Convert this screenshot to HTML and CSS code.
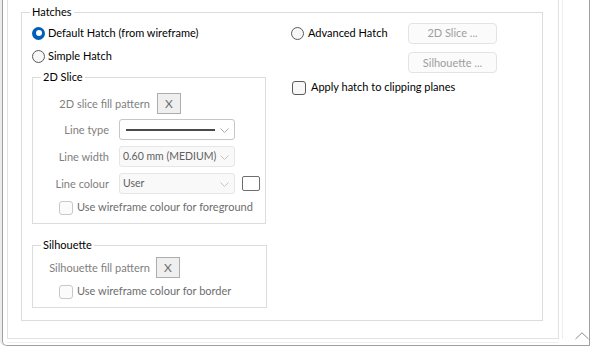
FILE: index.html
```html
<!DOCTYPE html>
<html>
<head>
<meta charset="utf-8">
<link rel="stylesheet" href="styles.css">
</head>
<body>
<div class="frame">
  <div class="panel">
    <div class="group hatches">
      <span class="legend">Hatches</span>
      <div class="cols">
        <div class="left">
          <div class="radio-row"><span class="radio on"></span><span class="t">Default Hatch (from wireframe)</span></div>
          <div class="radio-row second"><span class="radio"></span><span class="t">Simple Hatch</span></div>

          <div class="group slice">
            <span class="legend">2D Slice</span>
            <div class="fill-row">
              <span class="fill-label dis">2D slice fill pattern</span>
              <span class="xbtn">X</span>
            </div>
            <div class="form">
              <span class="lbl dis">Line type</span>
              <div class="select light"><span class="linesample"></span><svg class="chev" width="9" height="5" viewBox="0 0 9 5"><polyline points="0.5,0.5 4.5,4.5 8.5,0.5" fill="none" stroke="#a8a8a8" stroke-width="1"/></svg></div>
              <span></span>
              <span class="lbl dis">Line width</span>
              <div class="select"><span class="val">0.60 mm (MEDIUM)</span><svg class="chev" width="9" height="5" viewBox="0 0 9 5"><polyline points="0.5,0.5 4.5,4.5 8.5,0.5" fill="none" stroke="#c4c4c4" stroke-width="1"/></svg></div>
              <span></span>
              <span class="lbl dis">Line colour</span>
              <div class="select"><span class="val">User</span><svg class="chev" width="9" height="5" viewBox="0 0 9 5"><polyline points="0.5,0.5 4.5,4.5 8.5,0.5" fill="none" stroke="#c4c4c4" stroke-width="1"/></svg></div>
              <span class="swatch"></span>
            </div>
            <div class="check-row"><span class="check dis-box"></span><span class="dis2 t">Use wireframe colour for foreground</span></div>
          </div>

          <div class="group silh">
            <span class="legend">Silhouette</span>
            <div class="fill-row">
              <span class="fill-label dis">Silhouette fill pattern</span>
              <span class="xbtn">X</span>
            </div>
            <div class="check-row"><span class="check dis-box"></span><span class="dis2 t">Use wireframe colour for border</span></div>
          </div>
        </div>

        <div class="right">
          <div class="radio-row"><span class="radio"></span><span class="t">Advanced Hatch</span></div>
          <span class="btn">2D Slice ...</span>
          <span></span>
          <span class="btn">Silhouette ...</span>
          <div class="check-row apply"><span class="check"></span><span class="t">Apply hatch to clipping planes</span></div>
        </div>
      </div>
    </div>
  </div>
  <svg class="caret" width="14" height="8" viewBox="0 0 14 8"><polyline points="0.5,7 7,0.8 13.5,7" fill="none" stroke="#8c8c8c" stroke-width="1"/></svg>
</div>
</body>
</html>
```

FILE: styles.css
```css
html, body {
  margin: 0;
  padding: 0;
  background: #ffffff;
}
body {
  width: 592px;
  height: 347px;
  overflow: hidden;
  font-family: Lato, "Noto Sans", sans-serif;
  font-size: 11px;
  color: #000;
}
.frame {
  position: relative;
  box-sizing: border-box;
  margin-left: 2px;
  width: 588px;
  height: 346px;
  border: 1px solid #a0a0a0;
  border-top: none;
  border-bottom-left-radius: 5px;
  box-shadow: -2px 0 0 #ececec;
}
.panel {
  box-sizing: border-box;
  margin-left: 4px;
  width: 552px;
  height: 339px;
  border-left: 1px solid #e2e2e2;
  border-right: 1px solid #e2e2e2;
  border-bottom: 1px solid #e2e2e2;
  box-shadow: 3px 0 0 #fff, 4px 0 0 #ededed, 0 3px 0 #fff, 0 4px 0 #f0f0f0;
  padding-top: 12px;
}
.group {
  position: relative;
  box-sizing: border-box;
  border: 1px solid #dcdcdc;
}
.legend {
  position: absolute;
  top: -9px;
  left: 8px;
  padding: 0 2px;
  background: #fff;
  line-height: 16px;
  color: #000;
}
.t {
  padding-bottom: 2px;
}
.hatches {
  margin-left: 13px;
  width: 522px;
  height: 309px;
  padding: 9px 0 0 10px;
}
.cols {
  display: flex;
  gap: 25px;
}
.left {
  width: 234px;
}
.radio-row {
  display: flex;
  align-items: center;
  height: 22px;
  gap: 3px;
  white-space: nowrap;
}
.radio-row.second {
  margin-top: 1px;
}
.radio {
  box-sizing: border-box;
  width: 13px;
  height: 13px;
  border-radius: 50%;
  border: 1px solid #5a5a5a;
  background: #f7f7f7;
  flex: none;
}
.radio.on {
  border: none;
  background: #005fb8;
  position: relative;
}
.radio.on::after {
  content: "";
  position: absolute;
  left: 3.5px;
  top: 3.5px;
  width: 6px;
  height: 6px;
  border-radius: 50%;
  background: #fff;
}
.slice {
  margin-top: 10px;
  width: 234px;
  height: 147px;
  padding-top: 15px;
}
.silh {
  margin-top: 21px;
  width: 235px;
  height: 63px;
  padding-top: 11px;
}
.fill-row {
  display: flex;
  align-items: center;
  height: 21px;
}
.fill-label {
  width: 117px;
  text-align: right;
  margin-right: 7px;
  padding-bottom: 1px;
  white-space: nowrap;
}
.silh .fill-label {
  margin-right: 6px;
}
.dis {
  color: #808080;
}
.dis2 {
  color: #6d6d6d;
}
.xbtn {
  box-sizing: border-box;
  width: 24px;
  height: 21px;
  border: 1px solid #adadad;
  background: #efefef;
  color: #6d6d6d;
  font-size: 12px;
  display: flex;
  align-items: center;
  justify-content: center;
}
.form {
  margin-top: 5px;
  display: grid;
  grid-template-columns: 76px 116px 18px;
  column-gap: 10px;
  row-gap: 6px;
  align-items: center;
}
.form > :nth-child(3n) {
  margin-left: -3px;
}
.lbl {
  text-align: right;
  white-space: nowrap;
  padding-bottom: 1px;
}
.select {
  box-sizing: border-box;
  height: 21px;
  border: 1px solid #e6e6e6;
  border-radius: 3px;
  background: #f9f9f9;
  display: flex;
  align-items: center;
  padding: 0 0 0 3px;
  position: relative;
}
.select.light {
  background: #fff;
  border-color: #c6c6c6;
}
.select .val {
  color: #5f5f5f;
  white-space: nowrap;
  font-size: 10.5px;
  padding-bottom: 1px;
}
.linesample {
  width: 89px;
  height: 0;
  border-top: 2px solid #4a4a4a;
  margin-left: 3px;
}
.chev {
  position: absolute;
  right: 5px;
  top: 8px;
}
.swatch {
  box-sizing: border-box;
  width: 18px;
  height: 15px;
  border: 1px solid #6e6e6e;
  border-radius: 2px;
  background: #fff;
}
.check-row {
  display: flex;
  align-items: center;
  height: 15px;
  margin-top: 6px;
  padding-left: 26px;
  gap: 4px;
  white-space: nowrap;
}
.check {
  box-sizing: border-box;
  width: 14px;
  height: 14px;
  border: 1px solid #5a5a5a;
  border-radius: 3px;
  background: #f7f7f7;
  flex: none;
}
.check.dis-box {
  border-color: #c8c8c8;
  background: #fbfbfb;
}
.right {
  display: grid;
  grid-template-columns: 117px 89px;
  grid-auto-rows: auto;
  align-items: center;
  align-content: start;
  row-gap: 8px;
}
.right .radio-row {
  gap: 4px;
}
.btn {
  box-sizing: border-box;
  height: 21px;
  border: 1px solid #e3e3e3;
  border-radius: 4px;
  background: #fbfbfb;
  color: #9e9e9e;
  display: flex;
  align-items: center;
  justify-content: center;
  white-space: nowrap;
  padding-bottom: 1px;
}
.check-row.apply {
  grid-column: 1 / 3;
  padding-left: 1px;
  margin-top: -1px;
  gap: 5px;
  color: #000;
}
.caret {
  position: absolute;
  right: 0px;
  bottom: 5px;
}
```
